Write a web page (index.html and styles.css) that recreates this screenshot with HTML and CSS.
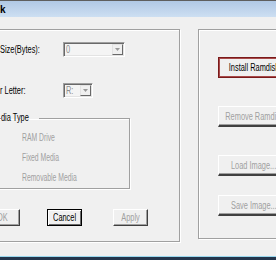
FILE: index.html
```html
<!DOCTYPE html>
<html lang="en">
<head>
  <meta charset="UTF-8">
  <title>Ramdisk</title>
  <link rel="stylesheet" href="styles.css">
</head>
<body>
  <div class="window">
    <div class="titlebar"><span class="title">k</span></div>

    <div class="client">
      <div class="panel panel-left">
        <div class="field field-size">
          <span class="label"><span class="t">Size(Bytes):</span></span>
          <span class="combo combo-wide">
            <span class="combo-text"><span class="t">0</span></span>
            <span class="combo-btn"><svg width="5" height="3" viewBox="0 0 5 3"><path d="M0 0h5L2.5 3z" fill="#9a9a9a"/></svg></span>
          </span>
        </div>

        <div class="field field-letter">
          <span class="label"><span class="t">r Letter:</span></span>
          <span class="combo combo-small">
            <span class="combo-text"><span class="t">R:</span></span>
            <span class="combo-btn"><svg width="5" height="3" viewBox="0 0 5 3"><path d="M0 0h5L2.5 3z" fill="#9a9a9a"/></svg></span>
          </span>
        </div>

        <fieldset class="group">
          <legend><span class="t">dia Type</span></legend>
          <div class="radio"><span class="dot"></span><span class="radio-text"><span class="t">RAM Drive</span></span></div>
          <div class="radio"><span class="dot"></span><span class="radio-text"><span class="t">Fixed Media</span></span></div>
          <div class="radio"><span class="dot"></span><span class="radio-text"><span class="t">Removable Media</span></span></div>
        </fieldset>

        <div class="actions">
          <button class="btn btn-ok" disabled><span class="t">OK</span></button>
          <button class="btn btn-cancel"><span class="t">Cancel</span></button>
          <button class="btn btn-apply" disabled><span class="t">Apply</span></button>
        </div>
      </div>

      <div class="panel panel-right">
        <button class="btn side-btn btn-install"><span class="t">Install Ramdisk</span></button>
        <button class="btn side-btn btn-remove" disabled><span class="t">Remove Ramdisk</span></button>
        <button class="btn side-btn btn-load" disabled><span class="t">Load Image...</span></button>
        <button class="btn side-btn btn-save" disabled><span class="t">Save Image...</span></button>
      </div>
    </div>

    <div class="taskbar"></div>
  </div>
</body>
</html>
```

FILE: styles.css
```css
body {
  margin: 0;
  font-family: "Liberation Sans", Arial, sans-serif;
  font-size: 10px;
  color: #000;
  background: #f0f0f0;
}
.window {
  width: 276px;
  height: 260px;
  overflow: hidden;
  background: #f0f0f0;
  display: flex;
  flex-direction: column;
}
/* dialog text is drawn narrower than Arial */
.t {
  display: inline-block;
  transform: scaleX(0.74);
  transform-origin: left center;
  white-space: nowrap;
}
.btn .t {
  transform-origin: center center;
  margin: 0 -12px;
}
.titlebar {
  height: 16px;
  border-top: 1px solid #5e5e5e;
  background: linear-gradient(#b0c8e5, #cddff2);
  display: flex;
  align-items: center;
  flex-shrink: 0;
}
.title {
  font-weight: bold;
  font-size: 10px;
}
.client {
  display: flex;
  padding-top: 12px;
  flex: 1;
}
.panel {
  box-sizing: border-box;
  border: 1px solid #a0a0a0;
  box-shadow: inset 1px 1px 0 #fff, 1px 1px 0 #fff;
  flex-shrink: 0;
}
.panel-left {
  margin-left: -12px;
  width: 192px;
  height: 213px;
  display: flex;
  flex-direction: column;
}
.panel-right {
  margin-left: 18px;
  width: 110px;
  height: 210px;
  display: flex;
  flex-direction: column;
  align-items: flex-start;
  padding-left: 19px;
}
.field {
  display: flex;
  align-items: center;
  margin-left: 11px;
}
.field-size {
  margin-top: 12px;
}
.field-letter {
  margin-top: 26px;
}
.label {
  width: 63px;
  white-space: nowrap;
}
.combo {
  box-sizing: border-box;
  height: 15px;
  display: flex;
  align-items: stretch;
  border: 1px solid;
  border-color: #a0a0a0 #fff #fff #a0a0a0;
  box-shadow: inset 1px 1px 0 #696969, inset -1px -1px 0 #e3e3e3;
  padding: 1px;
  background: #f4f4f4;
}
.combo-wide {
  width: 62px;
}
.combo-small {
  width: 30px;
}
.combo-text {
  flex: 1;
  color: #8d8d8d;
  padding-left: 1px;
  line-height: 11px;
}
.combo-btn {
  box-sizing: border-box;
  width: 11px;
  display: flex;
  align-items: center;
  justify-content: center;
  background: #f0f0f0;
  border: 1px solid;
  border-color: #e3e3e3 #696969 #696969 #e3e3e3;
}
.group {
  box-sizing: border-box;
  margin: 15px 0 0 5px;
  width: 136px;
  padding: 0 0 1px 6px;
  border: 1px solid #a0a0a0;
  box-shadow: inset 1px 1px 0 #fff, 1px 1px 0 #fff;
}
.group legend {
  padding: 0;
  line-height: 10px;
}
.radio {
  height: 20px;
  display: flex;
  align-items: center;
  margin-left: -10px;
}
.radio:first-of-type {
  margin-top: 4px;
}
.dot {
  box-sizing: border-box;
  width: 10px;
  height: 10px;
  border-radius: 50%;
  border: 1px solid;
  border-color: #8d8d8d #f0f0f0 #f0f0f0 #8d8d8d;
  flex-shrink: 0;
}
.radio-text {
  margin-left: 21px;
  color: #a0a0a0;
  white-space: nowrap;
}
.radio-text .t {
  transform: scaleX(0.68);
}
.actions {
  display: flex;
  margin-top: 20px;
}
.btn {
  box-sizing: border-box;
  font-family: inherit;
  font-size: 10px;
  color: #000;
  background: #f0f0f0;
  border: 1px solid;
  border-color: #fff #404040 #404040 #fff;
  box-shadow: inset -1px -1px 0 #a0a0a0;
  padding: 0;
  white-space: nowrap;
  overflow: visible;
}
.btn:disabled {
  color: #a0a0a0;
}
.actions .btn {
  height: 17px;
  width: 35px;
}
.btn-ok {
  margin-left: -4px;
  width: 34px;
}
.btn-cancel {
  margin-left: 27px;
  border: 1px solid #000;
  box-shadow: inset 1px 1px 0 #fff, inset -1px -1px 0 #696969;
}
.btn-apply {
  margin-left: 31px;
}
.side-btn {
  width: 72px;
  height: 21px;
  flex-shrink: 0;
}
.btn-install {
  margin-top: 27px;
  border: 1px solid #7a1a1a;
  box-shadow: inset 0 0 0 1px #a84a4a;
}
.btn-remove {
  margin-top: 28px;
  border-bottom-width: 2px;
}
.btn-load {
  margin-top: 28px;
  border-bottom-width: 2px;
}
.btn-save {
  margin-top: 19px;
  border-bottom-width: 2px;
}
.taskbar {
  height: 3px;
  border-top: 1px solid #9ad8ee;
  background: #24364d;
  flex-shrink: 0;
}
```
